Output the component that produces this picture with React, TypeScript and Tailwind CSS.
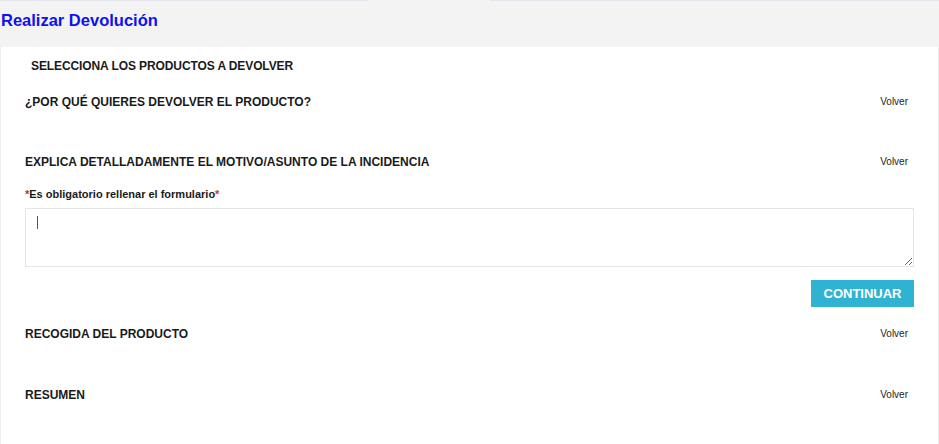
import React from "react";

function StepRow({ title, volver = true, className = "" }: { title: string; volver?: boolean; className?: string }) {
  return (
    <div className={`flex h-[20px] items-center justify-between pl-[24px] pr-[30px] ${className}`}>
      <span className="text-[12px] font-bold text-[#1a1a1a]">{title}</span>
      {volver && <span className="-mt-[2px] text-[10px] text-[#222]">Volver</span>}
    </div>
  );
}

export default function App() {
  return (
    <div className="h-[444px] w-[939px] bg-white" style={{ fontFamily: '"Liberation Sans", Arial, sans-serif' }}>
      <div className="flex h-[1px]">
        <div className="w-[368px] bg-[#e4e4ec]" />
        <div className="w-[122px] bg-[#f3f3f3]" />
        <div className="flex-1 bg-[#e4e4ec]" />
      </div>
      <div className="flex h-[46px] items-start bg-[#f3f3f3] pl-[1px] pt-[9px]">
        <h1 className="text-[16.5px] font-bold leading-[20px] text-[#1010f2]">Realizar Devolución</h1>
      </div>
      <div className="flex h-[397px] flex-col border-l border-r border-[#ececec]">
        <div className="mt-[9px] flex h-[20px] items-center pl-[30px]">
          <span className="text-[12px] font-bold tracking-[-0.1px] text-[#1a1a1a]">SELECCIONA LOS PRODUCTOS A DEVOLVER</span>
        </div>
        <StepRow title="¿POR QUÉ QUIERES DEVOLVER EL PRODUCTO?" className="mt-[16px]" />
        <StepRow title="EXPLICA DETALLADAMENTE EL MOTIVO/ASUNTO DE LA INCIDENCIA" className="mt-[40px]" />
        <div className="mt-[14px] flex h-[16px] items-center pl-[24px] text-[11px] font-bold text-[#1a1a1a]">
          <span className="text-[#b33]">*</span>Es obligatorio rellenar el formulario<span className="text-[#c33]">*</span>
        </div>
        <div className="relative ml-[24px] mr-[24px] mt-[6px] h-[59px]">
          <textarea className="block h-full w-full resize-y border border-[#e6e6e6] bg-white outline-none" />
          <span className="absolute left-[12px] top-[8px] h-[13px] w-[1px] bg-[#555]" />
        </div>
        <div className="mt-[13px] flex justify-end pr-[24px]">
          <button className="h-[27px] w-[103px] bg-[#30b3d2] text-[13px] font-bold text-white">CONTINUAR</button>
        </div>
        <StepRow title="RECOGIDA DEL PRODUCTO" className="mt-[17px]" />
        <StepRow title="RESUMEN" className="mt-[41px]" />
      </div>
    </div>
  );
}
